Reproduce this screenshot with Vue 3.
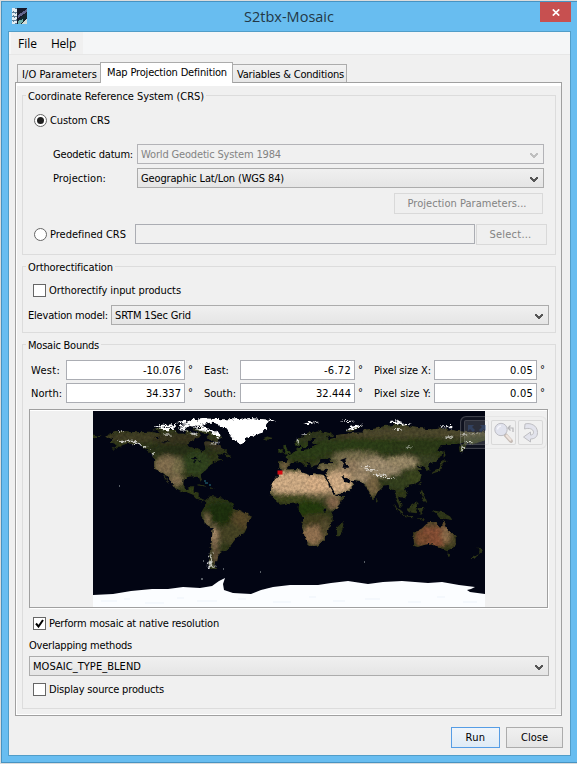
<script setup>
// Tracks a label so that its text run has the given width in pixels.
const vFit = {
  mounted(el, { value }) {
    const natural = el.getBoundingClientRect().width
    const count = el.textContent.length
    el.style.letterSpacing = `${(value - natural) / count}px`
  },
}

const tabs = [
  { label: 'I/O Parameters', width: 75, cls: 'first' },
  { label: 'Map Projection Definition', width: 120, cls: 'active' },
  { label: 'Variables & Conditions', width: 107, cls: 'last' },
]

const bounds = [
  [
    { label: 'West:', lw: 29, value: '-10.076', vw: 38, cls: 'a' },
    { label: 'East:', lw: 25, value: '-6.72', vw: 27, cls: 'b' },
    { label: 'Pixel size X:', lw: 57, value: '0.05', vw: 23, cls: 'c' },
  ],
  [
    { label: 'North:', lw: 31, value: '34.337', vw: 35, cls: 'a' },
    { label: 'South:', lw: 32, value: '32.444', vw: 35, cls: 'b' },
    { label: 'Pixel size Y:', lw: 57, value: '0.05', vw: 23, cls: 'c' },
  ],
]

// Coastlines as "longitude,latitude" pairs.
const lands = [
  '-168,66 -165,69 -156,72 -141,70.5 -128,71 -115,69 -108,69 -95,69 -94,73 -88,69 -82,70 -81,67 -87,64 -94,60 -92,57 -82,55 -80,51 -78,54 -77,58 -78,62 -72,62 -65,59 -62,57 -56,52 -60,50 -66,50 -64,46 -60,46 -66,44 -70,43 -70,41.5 -74,40 -76,36 -81,32 -80,26 -81,25 -83,29.5 -89,30 -94,29.5 -97,27 -97,22 -95,18 -91,19 -90,21 -87,21 -88,16 -83,15 -83,10 -79,9 -77,8 -80,7 -84,9 -88,13 -94,15.500 -97,15.500 -105,19.500 -106,23 -109,26 -113,31 -115,31 -110,23 -114,28 -117,33 -121,35 -124,40 -124,47 -127,51 -133,56 -140,60 -148,60 -152,59 -158,56 -163,54.5 -158,58 -165,61 -161,64',
  '-77,8 -72,12 -62,10.5 -52,5 -50,0 -44,-2.5 -35,-6 -39,-13 -39,-18 -41,-22 -48,-26 -54,-34 -57,-38 -62,-39 -65,-43 -66,-48 -69,-52 -65,-55 -71,-54 -75,-50 -73,-42 -71,-30 -70,-18 -76,-14 -81,-6 -80,-2 -77,3',
  '-9,43 -2,43.5 -1,46 -4,48.5 2,50 4,52 8,54 8,57 11,57 11,54 20,55 24,59 30,60 23,60 21,62 25,65 22,66 17,61 18,59 15,56 12,56 11,59 6,58 5,61 12,66 18,70 27,72 40,69 40,66 33,67 37,64 44,66 44,68 54,69 60,70 67,70 68,73 73,73 80,74 87,76 103,78 113,75 130,73 140,74 160,71 180,70 180,64 177,62 170,60 163,60 162,56 157,51 156,57 163,62 155,59 142,59 135,54 141,53 140,48 132,43 128,41 129,36 126,35 126,38 121,40 118,38 122,37 119,35 122,31 120,26 114,22 109,21.5 106,19 109,14 107,10.5 105,9 101,13 100,10 103,5 103.5,1.5 101,3 98,9 98,16 94,17 91,22 87,21.5 82,17 80,13 77.5,8 73,17 72,21 69,22 66,25 57,26 51,30 48,30 50,27 51,25 54,24 57,26 60,22 55,17 45,13 43,13 39,21 35,28 34,31 36,36 30,36 27,37 27,40 31,41.5 41,41 37,45 39,47 33,46 30,46 28,43 26,40.5 23,40 23,37 20,40 13,45.5 18,40 16,38 12,42 9,44 3,43 0,39 -2,37 -6,36 -9,37',
  '-6,36 10,37 11,34 20,31 22,33 32,31 32,30 36,24 37,20 40,15 43,12 51,12 47,5 40,-3 40,-11 35,-20 35,-24 32,-29 26,-34 18,-34 15,-27 12,-18 13,-8 9,-1 9,4 4,6 -8,4 -13,8 -17,14 -16,20 -17,21 -13,28 -9,32',
  '44,-25 47,-25 50,-15 49,-12 44,-17',
  '114,-22 122,-18 126,-14 130,-12 136,-12 136,-15 140,-17.5 142,-11 146,-19 153,-26 153,-31 150,-37 145,-39 140,-37 136,-34 131,-31.5 124,-33 118,-35 115,-34',
  '145,-41 148,-41 147,-43.5',
  '-5,50 1,51 -2,55 -3,58 -6,57 -3,54',
  '-10,52 -6,52 -6,55 -9,54',
  '-24,65 -20,66.5 -14,65 -19,63.5',
  '130,32 136,34 140,36 141,41 145,44 141,45 139,38 132,35',
  '142,46 144,50 142,54',
  '95,5 104,-2 106,-6 102,-4',
  '106,-6 114,-7 114,-8.5 106,-7.5',
  '109,1 117,7 119,5 116,-4 110,-3',
  '119,1 125,1 121,-1 123,-5 120,-5',
  '117,-8.5 125,-8.5 124,-10',
  '131,-1 141,-3 148,-7 150,-10 143,-9 138,-8 135,-4',
  '120,14 122,18 124,13 126,7 122,7 124,11',
  '173,-35 178,-38 175,-41 173,-41 167,-46 170,-46 174,-42 175,-38',
  '80,6 82,7 80,9.5',
  '-85,22 -75,20 -82,23',
  '-74,18.5 -69,18.5 -72,20',
  '120,22 122,25 120,24',
  '-56,47 -53,47 -56,51.5 -59,48',
  '-120,72 -105,73 -102,69 -117,69',
  '-126,72 -120,76 -116,73',
  '-89,73 -80,74 -68,70 -61,66 -66,62 -76,65 -73,68',
  '52,71 57,71 68,77 60,76',
  '-180,68.5 -172,66.5 -180,65',
]

const snow = [
  '-86,80 -73,82.500 -50,82.500 -35,83.5 -18,82 -12,82 -20,79 -20,75 -23,71 -32,68 -39,65 -43,60 -47,61 -52,65 -54,69 -58,74 -63,76 -68,79',
  '-94,80 -88,82 -75,83 -62,82.5 -72,80 -78,77.500 -86,76.500 -92,77.500',
  '-102,77 -93,78 -90,76 -97,74.500',
  '-118,77 -104,78 -104,75.500 -112,75',
  '-124,76 -115,77.500 -115,74.500',
  '-92,76 -80,77 -78,75',
  '-88,73.500 -78,75 -70,72 -64,69 -68,69 -78,72',
  '-105,80 -94,81 -94,78',
  '-122,73.500 -106,75 -104,73 -114,72',
  '-102,74 -94,74.500 -94,72 -99,72',
  '-73,70 -64,69 -62,66 -67,67',
  '12,79 20,80.5 27,80 18,77.500',
  '52,71.500 57,75.500 69,77.500 70,76.500 60,74.500',
  '92,80.500 98,81.500 106,79 98,78.5',
  '98,78.900 113,77.500 104,76.500',
  '45,80.6 60,81 56,80',
  '137,75.8 149,76.2 151,75 142,75',
  '179,71.8 175,71 180,70.8',
]

const seas = [
  '47,45 53,47 51,44 54,40 54,37 49,37 50,41',
  '-92,47 -85,48 -84,46 -88,46.5',
  '-87,42 -85,45 -86,46 -88,43',
  '-84,45 -80,43 -82,43',
  '-124,66 -118,66.5 -121,65',
  '-117,62 -109,62.5 -113,61',
  '31.5,0 34,0.5 34,-2 32,-2.5',
]

// Ground cover, painted coarse to fine: lon, lat, rx, ry, colour.
const cover = [
  [-140, 66, 32, 5, '#3d3b22'], [-100, 64, 25, 6, '#36301c'], [-70, 59, 13, 5, '#3b3424'],
  [-100, 54, 33, 6, '#252e14'], [-85, 42, 13, 11, '#2e401a'], [-112, 40, 12, 9, '#7d6a4c'],
  [-102, 39, 5, 9, '#716845'], [-104, 26, 8, 6, '#7d6a4c'], [-91, 16, 8, 4, '#303d18'],
  [-63, -4, 16, 11, '#1f2f0e'], [-44, -10, 9, 10, '#524526'], [-53, -23, 11, 10, '#433f21'],
  [-68, -29, 4, 15, '#80694d'], [-75, -11, 2, 8, '#8c7455'], [-67, -43, 4, 9, '#5b4c34'], [-70, -22, 3, 5, '#ad9070'],
  [10, 53, 28, 8, '#2b3a16'], [23, 65, 15, 5, '#2d361a'], [-4, 40, 5, 4, '#6f5d3e'],
  [65, 67, 25, 4, '#3e3820'], [120, 70, 68, 6, '#4a4429'], [80, 58, 60, 7, '#293a14'],
  [125, 58, 32, 8, '#2a3814'], [62, 47, 23, 6, '#756b4c'], [58, 38, 15, 7, '#8d785b'],
  [36, 38, 12, 4, '#756746'], [85, 40, 23, 7, '#99876b'], [105, 43, 15, 6, '#938363'],
  [89, 34, 14, 5, '#948467'], [67, 29, 9, 6, '#998466'], [77, 21, 6, 10, '#726041'],
  [102, 25, 13, 8, '#333e1c'], [116, 29, 8, 8, '#37421d'], [126, 45, 9, 5, '#374120'],
  [45, 24, 14, 11, '#c9a680'], [5, 24, 31, 11, '#c8a680'], [28, 23, 12, 9, '#cda780'],
  [5, 10, 29, 4.5, '#3d451c'], [30, 12, 12, 3, '#6a6140'], [19, 0, 14, 8, '#233710'],
  [41, 6, 7, 6, '#806448'], [25, -11, 15, 7, '#3e3a1f'], [22, -24, 10, 9, '#8c6d4e'],
  [33, -17, 5, 9, '#50472b'], [133, -25, 17, 10, '#804c33'], [122, -28, 7, 6, '#75482e'],
  [145, -23, 5, 9, '#856747'], [151, -31, 4, 7, '#454024'], [134, -14, 13, 3, '#58442a'],
]

const peaks = [
  [-148, 62, 9, .8], [-139, 60, 4, .8], [-132, 57, 2, .8], [-125, 51, 1, 2], [-72, -45, .8, 5], [-73, -51, 1.2, 3], [-71, -53, 4, .7],
  [75, 36, 6, .7], [83, 31, 7, .7], [91, 28, 7, .5], [70, 39, 4, .6], [15, 68, 4, .7], [8, 62, 1, 2],
  [99, 73, 4, .5], [146, 66, 5, .5], [161, 68, 3, .6], [110, 57, 3, .5], [166, 61, 4, .6], [159, 55, .7, 3],
  [-155, 71, 4, .4], [-112, 68, 4, .7], [-88, 69, 4, 1], [-79, 72, 5, .8], [170, 69, 5, .4], [-68, 60, 5, .6],
]
</script>

<template>
  <div class="window">
    <header class="titlebar">
      <svg class="logo" viewBox="0 0 15 16" shape-rendering="crispEdges">
        <rect width="15" height="16" fill="#17192a" />
        <rect width="5" height="16" fill="#e4edf3" />
        <path d="M1 3.500h1M3 .5h2M1 7.500h1M3 5.500h1M2 9.500h1M4 11.500h1M1 13.500h1M3 15.500h2M0 4.500h5M0 8.500h5M0 12.500h5" stroke="#5f809a" fill="none" />
        <path d="M6 7 15 1v3L6 10z" fill="#62658c" />
        <path d="M6 16v-4l9-7v4l-5 7z" fill="#14282e" />
        <path d="M6 16v-3l5-2v3l-3 2z" fill="#6dafa9" />
        <path d="M10 16l5-6v6z" fill="#d2ddd8" />
      </svg>
      <h1><span v-fit="90">S2tbx-Mosaic</span></h1>
      <button class="x"><svg viewBox="0 0 8 7"><path d="M.8.4 7.2 6.6M7.2.4.8 6.6" stroke="#fff" stroke-width="1.7" /></svg></button>
    </header>

    <main class="client">
      <nav class="menu"><div><span v-fit="19">File</span><span v-fit="25">Help</span></div></nav>

      <div class="tabs">
        <div v-for="t in tabs" :key="t.label" class="tab" :class="t.cls"><span v-fit="t.width">{{ t.label }}</span></div>
      </div>

      <section class="panel">
        <fieldset class="group crs">
          <legend><span v-fit="176">Coordinate Reference System (CRS)</span></legend>
          <label class="row custom"><i class="radio on"></i><span v-fit="60">Custom CRS</span></label>
          <div class="row field datum">
            <span class="lbl"><span v-fit="80">Geodetic datum:</span></span>
            <div class="select off"><span v-fit="140">World Geodetic System 1984</span><svg viewBox="0 0 8 6"><path d="M0 0h2v1h1v1h2V1h1V0h2v2H7v1H6v1H5v1H3V4H2V3H1V2H0z" /></svg></div>
          </div>
          <div class="row field projection">
            <span class="lbl"><span v-fit="53">Projection:</span></span>
            <div class="select"><span v-fit="143">Geographic Lat/Lon (WGS 84)</span><svg viewBox="0 0 8 6"><path d="M0 0h2v1h1v1h2V1h1V0h2v2H7v1H6v1H5v1H3V4H2V3H1V2H0z" /></svg></div>
          </div>
          <div class="row params"><button class="btn off"><span v-fit="119">Projection Parameters...</span></button></div>
          <div class="row predefined">
            <i class="radio"></i><span class="lbl"><span v-fit="76">Predefined CRS</span></span>
            <div class="input off"></div>
            <button class="btn off"><span v-fit="42">Select...</span></button>
          </div>
        </fieldset>

        <fieldset class="group ortho">
          <legend><span v-fit="85">Orthorectification</span></legend>
          <label class="row"><i class="check"></i><span v-fit="132">Orthorectify input products</span></label>
          <div class="row elevation">
            <span class="lbl"><span v-fit="80">Elevation model:</span></span>
            <div class="select"><span v-fit="76">SRTM 1Sec Grid</span><svg viewBox="0 0 8 6"><path d="M0 0h2v1h1v1h2V1h1V0h2v2H7v1H6v1H5v1H3V4H2V3H1V2H0z" /></svg></div>
          </div>
        </fieldset>

        <fieldset class="group mosaic">
          <legend><span v-fit="71">Mosaic Bounds</span></legend>
          <div v-for="(line, i) in bounds" :key="i" class="bounds">
            <div v-for="b in line" :key="b.label" class="bound" :class="b.cls">
              <span class="lbl"><span v-fit="b.lw">{{ b.label }}</span></span>
              <div class="input"><span v-fit="b.vw">{{ b.value }}</span></div>
              <span class="deg">°</span>
            </div>
          </div>

          <div class="mapbox">
            <svg class="map" viewBox="0 0 392 196">
              <defs>
                <filter id="coast" x="0" y="0" width="392" height="196" filterUnits="userSpaceOnUse" color-interpolation-filters="sRGB">
                  <feTurbulence type="fractalNoise" baseFrequency=".22" numOctaves="3" seed="4" result="w" />
                  <feDisplacementMap in="SourceGraphic" in2="w" scale="4" xChannelSelector="R" yChannelSelector="G" result="d" />
                  <feTurbulence type="fractalNoise" baseFrequency=".35" numOctaves="4" seed="9" />
                  <feColorMatrix values="1.5 0 0 0 -.25  1.5 0 0 0 -.25  1.5 0 0 0 -.25  0 0 0 0 1" result="n" />
                  <feComposite in="d" in2="n" operator="arithmetic" k1=".3" k2=".84" />
                </filter>
                <filter id="rough" x="0" y="0" width="392" height="196" filterUnits="userSpaceOnUse" color-interpolation-filters="sRGB">
                  <feTurbulence type="fractalNoise" baseFrequency=".3" numOctaves="3" seed="2" result="r" />
                  <feDisplacementMap in="SourceGraphic" in2="r" scale="6" xChannelSelector="R" yChannelSelector="G" />
                </filter>
                <filter id="soft" x="-20%" y="-20%" width="140%" height="140%"><feGaussianBlur stdDeviation="2" /></filter>
                <clipPath id="land"><polygon v-for="(p, i) in lands" :key="i" :points="p" /></clipPath>
              </defs>
              <rect width="392" height="196" fill="#020513" />
              <g filter="url(#coast)">
                <g transform="translate(196 98) scale(1.0889 -1.0889)">
                  <g clip-path="url(#land)">
                    <rect x="-180" y="-90" width="360" height="180" fill="#2d3518" />
                    <g filter="url(#soft)">
                      <ellipse v-for="(c, i) in cover" :key="i" :cx="c[0]" :cy="c[1]" :rx="c[2]" :ry="c[3]" :fill="c[4]" />
                    </g>
                  </g>
                  <polygon v-for="(p, i) in seas" :key="i" :points="p" fill="#020513" />
                </g>
              </g>
              <g filter="url(#rough)">
                <g transform="translate(196 98) scale(1.0889 -1.0889)" fill="#fff">
                  <polygon v-for="(p, i) in snow" :key="i" :points="p" />
                  <ellipse v-for="(c, i) in peaks" :key="i" :cx="c[0]" :cy="c[1]" :rx="c[2]" :ry="c[3]" opacity=".75" />
                </g>
              </g>
              <path d="M0 184 20 183 38 180 59 178 75 178 90 176 107 177 119 175 126 170 132 167 130 173 131 179 140 182 158 183 168 179 180 176 197 174 225 174 238 172 255 170 275 173 290 171 309 170 335 172 349 171 366 174 382 176 378 178 374 179 377 181 392 183V196H0Z" fill="#fbfdff" />
              <path d="M8 190h16M31 188h6M52 192h19M84 187h7M104 190h20M145 188h8M180 191h18M216 186h7M240 190h12M272 188h15M315 191h13M344 186h8M370 191h14" stroke="#e4eff6" stroke-width=".6" />
              <path d="M110 150h1M130 158h1M167 161h1M271 151h1M108 168h2M26 75h1" stroke="#aeb8b8" />
              <path d="M111 70h2M112 72h3M116 74h2" stroke="#26768a" />
              <rect x="184.500" y="59.500" width="5" height="4" fill="#d50b12" />
            </svg>
            <div class="tools">
              <span class="tool full"><svg viewBox="0 0 22 22"><path d="M2 3h6L6 5l3 3-2 2-3-3-2 2zM20 3h-6l2 2-3 3 2 2 3-3 2 2z" fill="#3d5a8c" /></svg></span>
              <span class="tool"><svg viewBox="0 0 22 22"><path d="m12.500 13 5.500 6" stroke="#c5bbb5" stroke-width="4" stroke-linecap="round" /><path d="m13 13 5 5.500" stroke="#eee3dc" stroke-width="2.200" /><circle cx="8" cy="7.500" r="6.200" fill="#e0e2ed" stroke="#bcbcc2" /><path d="M4.500 7.500A4 4 0 0 1 8 4" stroke="#f4f4fb" stroke-width="1.500" fill="none" /><path d="M15 6h5v4M17.500 3.500 15 6l2.500 2.500" fill="none" stroke="#b5b5b8" stroke-width="1.200" /></svg></span>
              <span class="tool"><svg viewBox="0 0 22 22"><path d="M5 2C10 .5 17.500 3 17.500 10.500c0 4.500-3 6.500-7 6.500v3L3.500 15l7-5v3c2 0 3-1 3-2.800C13.500 7 9 5.500 4.500 7z" fill="#e2e3ec" stroke="#bdbdc1" /></svg></span>
            </div>
          </div>

          <label class="row native"><i class="check"><svg viewBox="0 0 9 9"><path d="M1 4.500 3.500 7.500 8 1" fill="none" stroke="#000" stroke-width="2" /></svg></i><span v-fit="170">Perform mosaic at native resolution</span></label>
          <div class="row overlap"><span v-fit="103">Overlapping methods</span></div>
          <div class="select wide"><span v-fit="108">MOSAIC_TYPE_BLEND</span><svg viewBox="0 0 8 6"><path d="M0 0h2v1h1v1h2V1h1V0h2v2H7v1H6v1H5v1H3V4H2V3H1V2H0z" /></svg></div>
          <label class="row display"><i class="check"></i><span v-fit="115">Display source products</span></label>
        </fieldset>
      </section>

      <footer class="actions">
        <button class="btn run"><span v-fit="20">Run</span></button>
        <button class="btn close"><span v-fit="27">Close</span></button>
      </footer>
    </main>
  </div>
</template>

<style>
body { background: #dcdcdc; overflow: hidden; }
</style>

<style scoped>
* { box-sizing: border-box; }
.window { height: 762px; margin: 1px 0 0 1px; width: 576px; border: 1px solid #4793c2; border-right: 0; background: #68bdf0; font: 11px/14px "DejaVu Sans Condensed", "DejaVu Sans", sans-serif; color: #000; padding-left: 6px; white-space: nowrap; }
.titlebar { height: 29px; display: grid; grid-template-columns: 40px 1fr 40px; padding: 0 2px 0 3px; align-items: start; }
.logo { width: 15px; height: 16px; margin: 6px 0 0 1px; display: block; }
h1 { margin: 5px 0 0 0; padding-right: 8px; text-align: center; font: 14.500px/20px "Open Sans", "Noto Sans", sans-serif; color: #233846; }
.x { border: 0; padding: 0; width: 31px; height: 20px; background: #c75050; display: grid; place-items: center; margin-left: 5px; }
.x svg { width: 8px; height: 7px; margin-top: 1px; }
.client { width: 563px; height: 725px; border: 1px solid #519dc8; background: #f0f0f0; }
.menu { height: 23px; background: #f5f6f7; border-bottom: 1px solid #e7e7e7; padding-left: 2px; font: 12px/22px "Open Sans", "Noto Sans", sans-serif; }
.menu div { width: 72px; height: 22px; background: #f0f0f0; display: flex; gap: 14px; padding: 1px 0 0 7px; }
.tabs { display: flex; height: 27px; align-items: flex-end; padding-left: 8px; }
.tab { height: 18px; border: 1px solid #acacac; border-bottom: 0; background: linear-gradient(#f2f2f2, #e6e6e6); padding-top: 3px; text-align: center; line-height: 14px; }
.tab.first { width: 83px; border-right: 0; padding-left: 1px; }
.tab.active { width: 133px; height: 21px; background: #fff; padding-top: 3px; padding-left: 1px; margin-bottom: -1px; position: relative; z-index: 1; }
.tab.last { width: 114px; border-left: 0; padding-left: 2px; }
.panel { margin: 0 0 0 6px; width: 547px; height: 634px; border: 1px solid #a0a0a0; box-shadow: inset 1px -1px #fff, inset 0 3px #fff; padding: 12px 5px 0 6px; }
.group { margin: 0; min-width: 0; border: 1px solid #dcdcdc; position: relative; padding: 0; }
legend { position: absolute; top: -6px; left: 3px; padding: 0 2px; background: #f0f0f0; height: 14px; line-height: 14px; }
.crs { height: 160px; padding: 17px 8px 0 11px; }
.ortho { margin-top: 11px; height: 67px; padding: 17px 6px 0 5px; }
.mosaic { margin-top: 11px; height: 365px; padding: 15px 6px 0; }
.row { display: flex; align-items: center; }
.radio { width: 13px; height: 13px; border: 1px solid #666; border-radius: 50%; background: #fff; flex: none; margin-right: 3px; display: grid; place-items: center; }
.radio.on::after { content: ""; width: 7px; height: 7px; border-radius: 50%; background: #202020; }
.check { width: 13px; height: 13px; border: 1px solid #666; background: #fff; flex: none; margin-right: 3px; display: grid; place-items: center; }
.check svg { width: 9px; height: 9px; }
.custom { height: 15px; }
.field { height: 20px; padding-left: 19px; padding-right: 3px; }
.field .lbl { width: 84px; }
.lbl { padding-top: 1px; }
.datum { margin-top: 16px; }
.projection { margin-top: 4px; }
.select { flex: 1; height: 20px; border: 1px solid #acacac; background: linear-gradient(#f0f0f0, #e5e5e5); display: flex; align-items: center; justify-content: space-between; padding: 1px 5px 0 3px; }
.select svg { width: 8px; height: 6px; fill: #555; margin-top: 3px; }
.select.off { background: #f0f0f0; color: #838383; border-color: #b3b3b7; }
.select.off svg { fill: #bfbfbf; }
.btn { font: inherit; height: 21px; padding: 0; border: 1px solid #acacac; background: linear-gradient(#f0f0f0, #e5e5e5); text-align: center; color: #000; }
.btn.off { background: #efefef; border-color: #d9d9d9; color: #838383; }
.params { margin-top: 5px; justify-content: flex-end; padding-right: 4px; }
.params .btn { width: 149px; padding-right: 3px; }
.predefined { margin-top: 10px; }
.predefined .lbl { width: 85px; padding-top: 0; }
.predefined .input { width: 340px; margin-bottom: 1px; }
.predefined .btn { width: 71px; margin-left: 1px; padding-right: 2px; }
.input { height: 20px; border: 1px solid #abadb3; background: #fff; text-align: right; padding: 3px 3px 0 0; }
.input.off { background: #f0f0f0; }
.ortho label { padding-left: 5px; height: 13px; }
.elevation { margin-top: 8px; }
.elevation .lbl { width: 83px; }
.bounds { display: flex; height: 20px; margin-bottom: 3px; padding-left: 2px; }
.bound { display: flex; align-items: center; }
.a .lbl { width: 35px; } .a .input { width: 119px; } .a .deg { width: 19px; }
.b .lbl { width: 36px; } .b .input { width: 115px; } .b .deg { width: 19px; }
.c .lbl { width: 60px; } .c .input { width: 103px; }
.deg { padding-left: 3px; }
.mapbox { height: 199px; width: 519px; margin-top: 6px; border: 1px solid #a0a0a0; box-shadow: 1px 1px #fff, inset 0 1px #fff; display: flex; justify-content: center; padding: 1px 0 0 0; position: relative; }
.map { width: 392px; height: 196px; display: block; flex: none; margin-left: 1px; }
.tools { position: absolute; right: 0; top: 6px; width: 87px; height: 33px; border: 1px solid rgba(205, 205, 205, .25); border-radius: 6px; display: flex; gap: 2px; padding: 3px; background: rgba(240, 240, 240, .06); box-shadow: inset 0 0 1px rgba(200, 200, 200, .3); }
.tool { width: 25px; height: 25px; border: 1px solid rgba(190, 190, 190, .5); border-radius: 2px; background: rgba(245, 245, 245, .12); display: grid; place-items: center; }
.full { border-color: rgba(160, 160, 160, .2); }
.full svg { opacity: .45; }
.tool svg { width: 22px; height: 22px; }
.native { height: 13px; margin-top: 9px; padding-left: 4px; }
.overlap { margin-top: 9px; height: 14px; padding-left: 0; }
.wide { width: 520px; margin-top: 3px; }
.display { height: 13px; margin-top: 7px; padding-left: 4px; }
.actions { display: flex; justify-content: flex-end; gap: 6px; padding: 11px 7px 0 0; }
.run { width: 49px; border-color: #569de5; background: linear-gradient(#f0f5fa, #dfebf6); }
.close { width: 57px; }
</style>
